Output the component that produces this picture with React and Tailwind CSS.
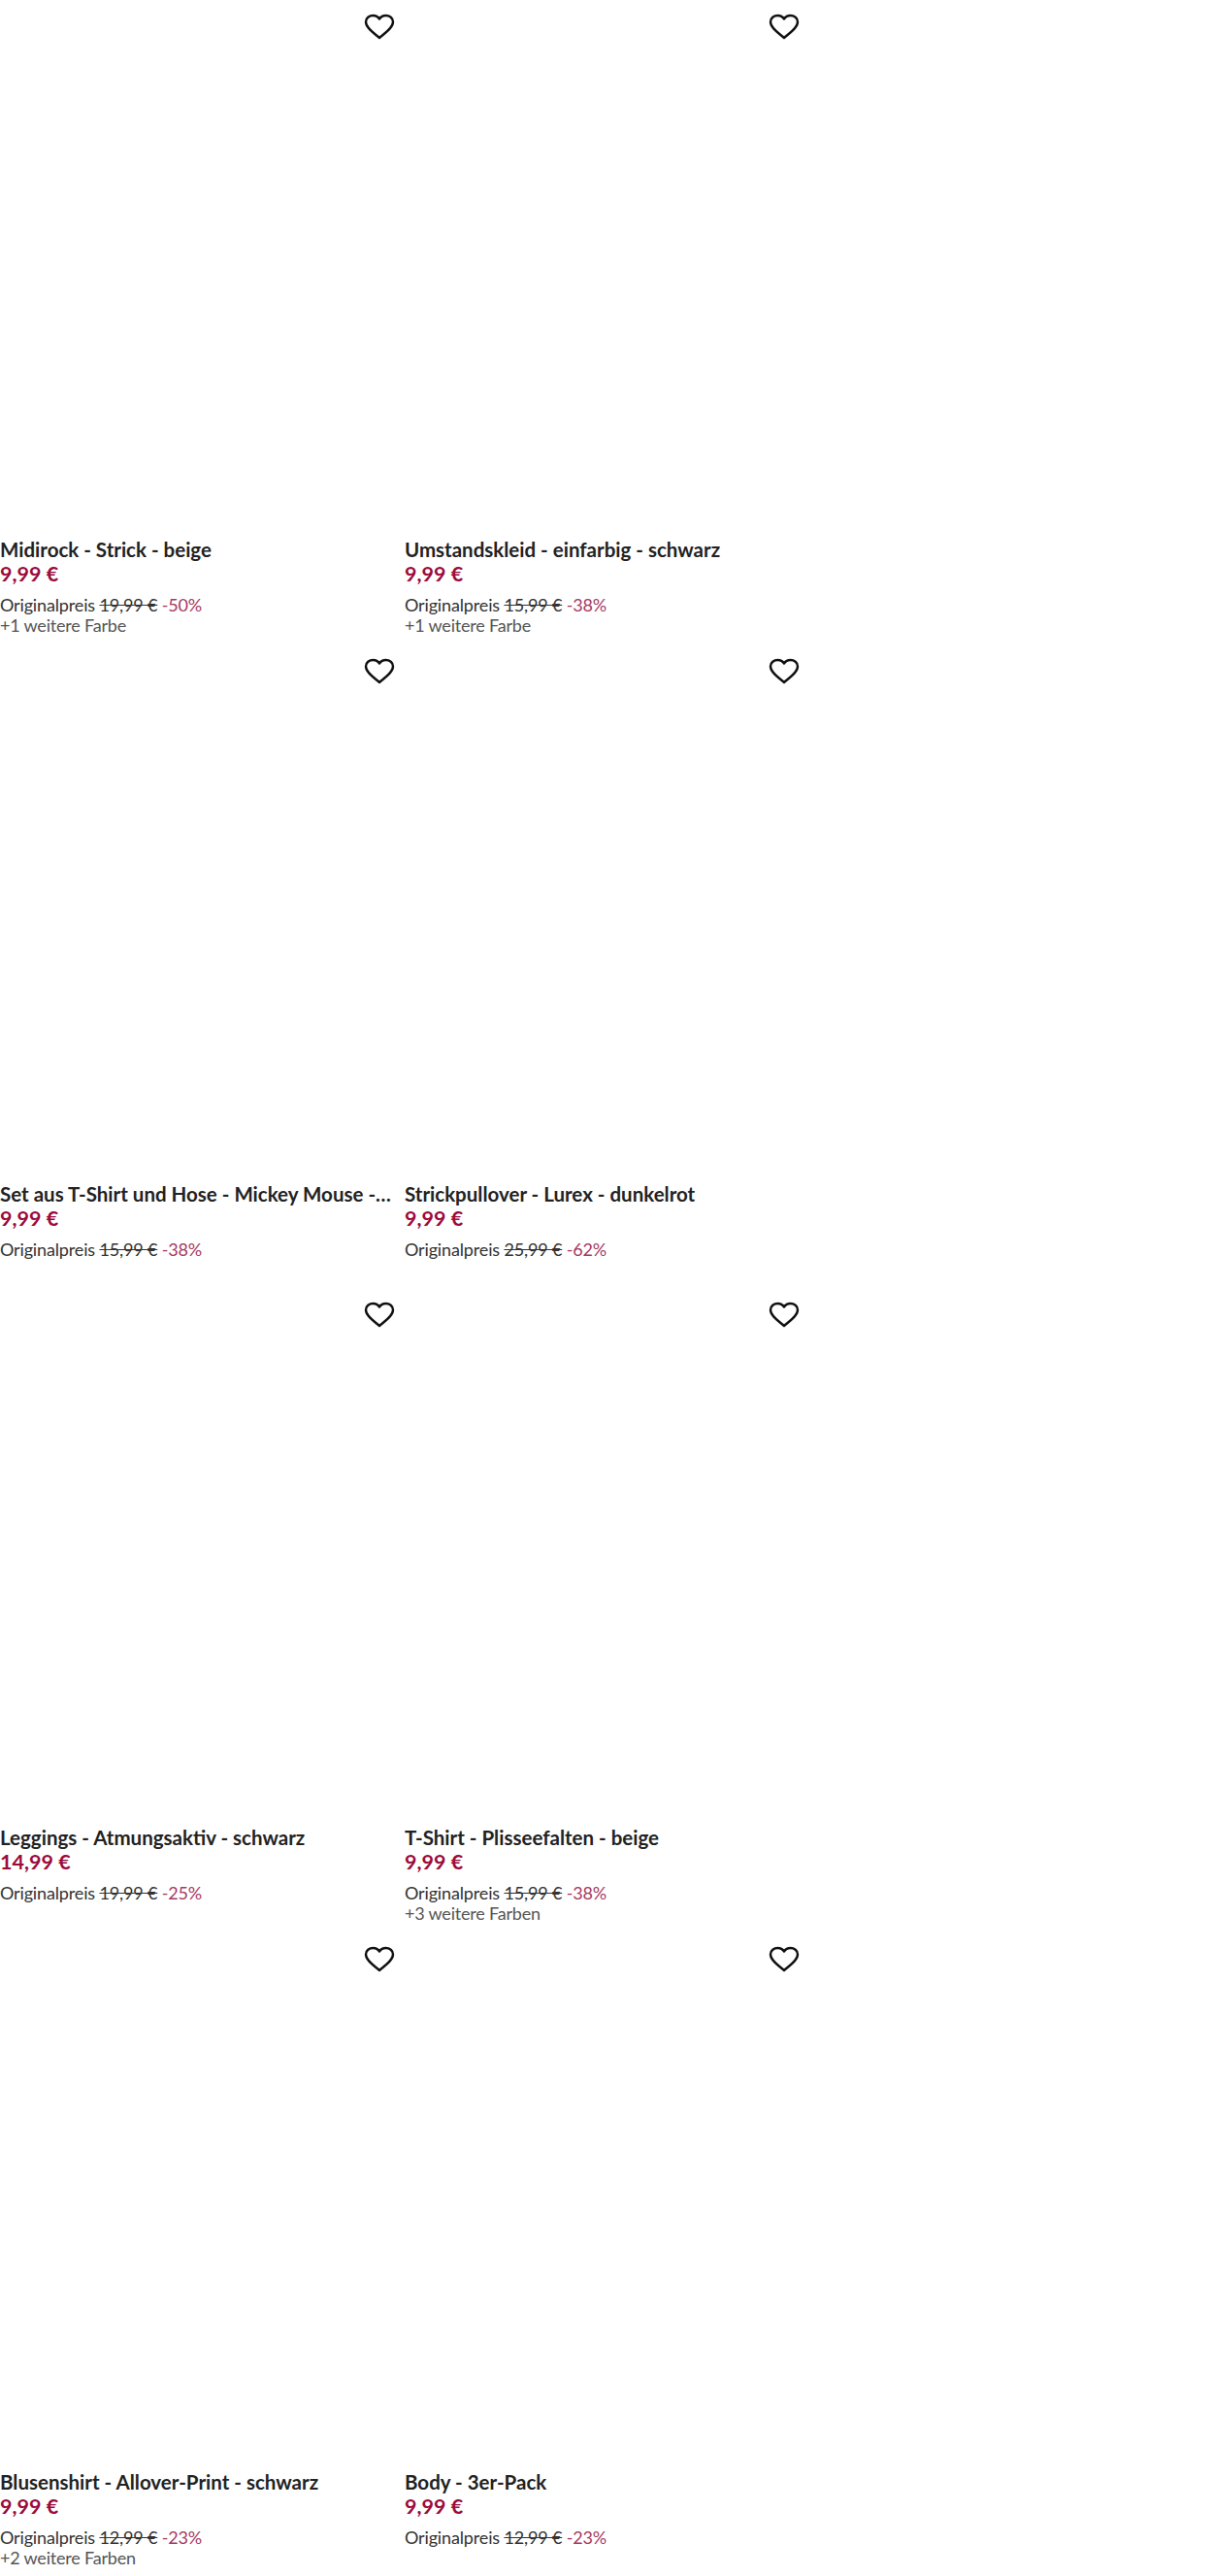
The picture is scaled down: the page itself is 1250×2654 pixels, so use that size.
const products = [
  { title: 'Midirock - Strick - beige', price: '9,99 €', original: '19,99 €', discount: '-50%', colors: '+1 weitere Farbe' },
  { title: 'Umstandskleid - einfarbig - schwarz', price: '9,99 €', original: '15,99 €', discount: '-38%', colors: '+1 weitere Farbe' },
  { title: 'Set aus T-Shirt und Hose - Mickey Mouse - schwarz', price: '9,99 €', original: '15,99 €', discount: '-38%' },
  { title: 'Strickpullover - Lurex - dunkelrot', price: '9,99 €', original: '25,99 €', discount: '-62%' },
  { title: 'Leggings - Atmungsaktiv - schwarz', price: '14,99 €', original: '19,99 €', discount: '-25%' },
  { title: 'T-Shirt - Plisseefalten - beige', price: '9,99 €', original: '15,99 €', discount: '-38%', colors: '+3 weitere Farben' },
  { title: 'Blusenshirt - Allover-Print - schwarz', price: '9,99 €', original: '12,99 €', discount: '-23%', colors: '+2 weitere Farben' },
  { title: 'Body - 3er-Pack', price: '9,99 €', original: '12,99 €', discount: '-23%' },
];

function Heart() {
  return (
    <svg className="w-8 h-8" viewBox="0 0 32 32" fill="none" stroke="#111" strokeWidth="2.4" strokeLinejoin="round">
      <path d="M16 27 C11 22.5 2 17 2 10.5 C2 6.5 5.5 4 9.5 4 C12.3 4 14.6 5.3 16 7.5 C17.4 5.3 19.7 4 22.5 4 C26.5 4 30 6.5 30 10.5 C30 17 21 22.5 16 27 Z" />
    </svg>
  );
}

function ProductCard({ product }) {
  return (
    <article className="h-[663.5px]">
      <div className="relative h-[553px] bg-white">
        <button className="absolute top-[12px] right-[-2px] w-[32px]">
          <Heart />
        </button>
      </div>
      <h3 className="text-[20.5px] leading-[26px] font-bold text-[#222] truncate">{product.title}</h3>
      <p className="text-[21.5px] leading-[24px] font-bold text-[#9b0b3c]">{product.price}</p>
      <p className="mt-[10px] text-[18px] leading-[20px] text-[#333] tracking-[-0.15px]">
        Originalpreis <span className="line-through">{product.original}</span>{' '}
        <span className="text-[#a63a62]">{product.discount}</span>
      </p>
      {product.colors && <p className="mt-px text-[18px] leading-[20px] text-[#555] tracking-[-0.2px]">{product.colors}</p>}
    </article>
  );
}

export default function App() {
  return (
    <div className="w-[1250px] h-[2654px] overflow-hidden bg-white font-['Lato',sans-serif]">
      <div className="grid grid-cols-[405px_405px] gap-x-[12px]">
        {products.map((p) => (
          <ProductCard key={p.title} product={p} />
        ))}
      </div>
    </div>
  );
}
